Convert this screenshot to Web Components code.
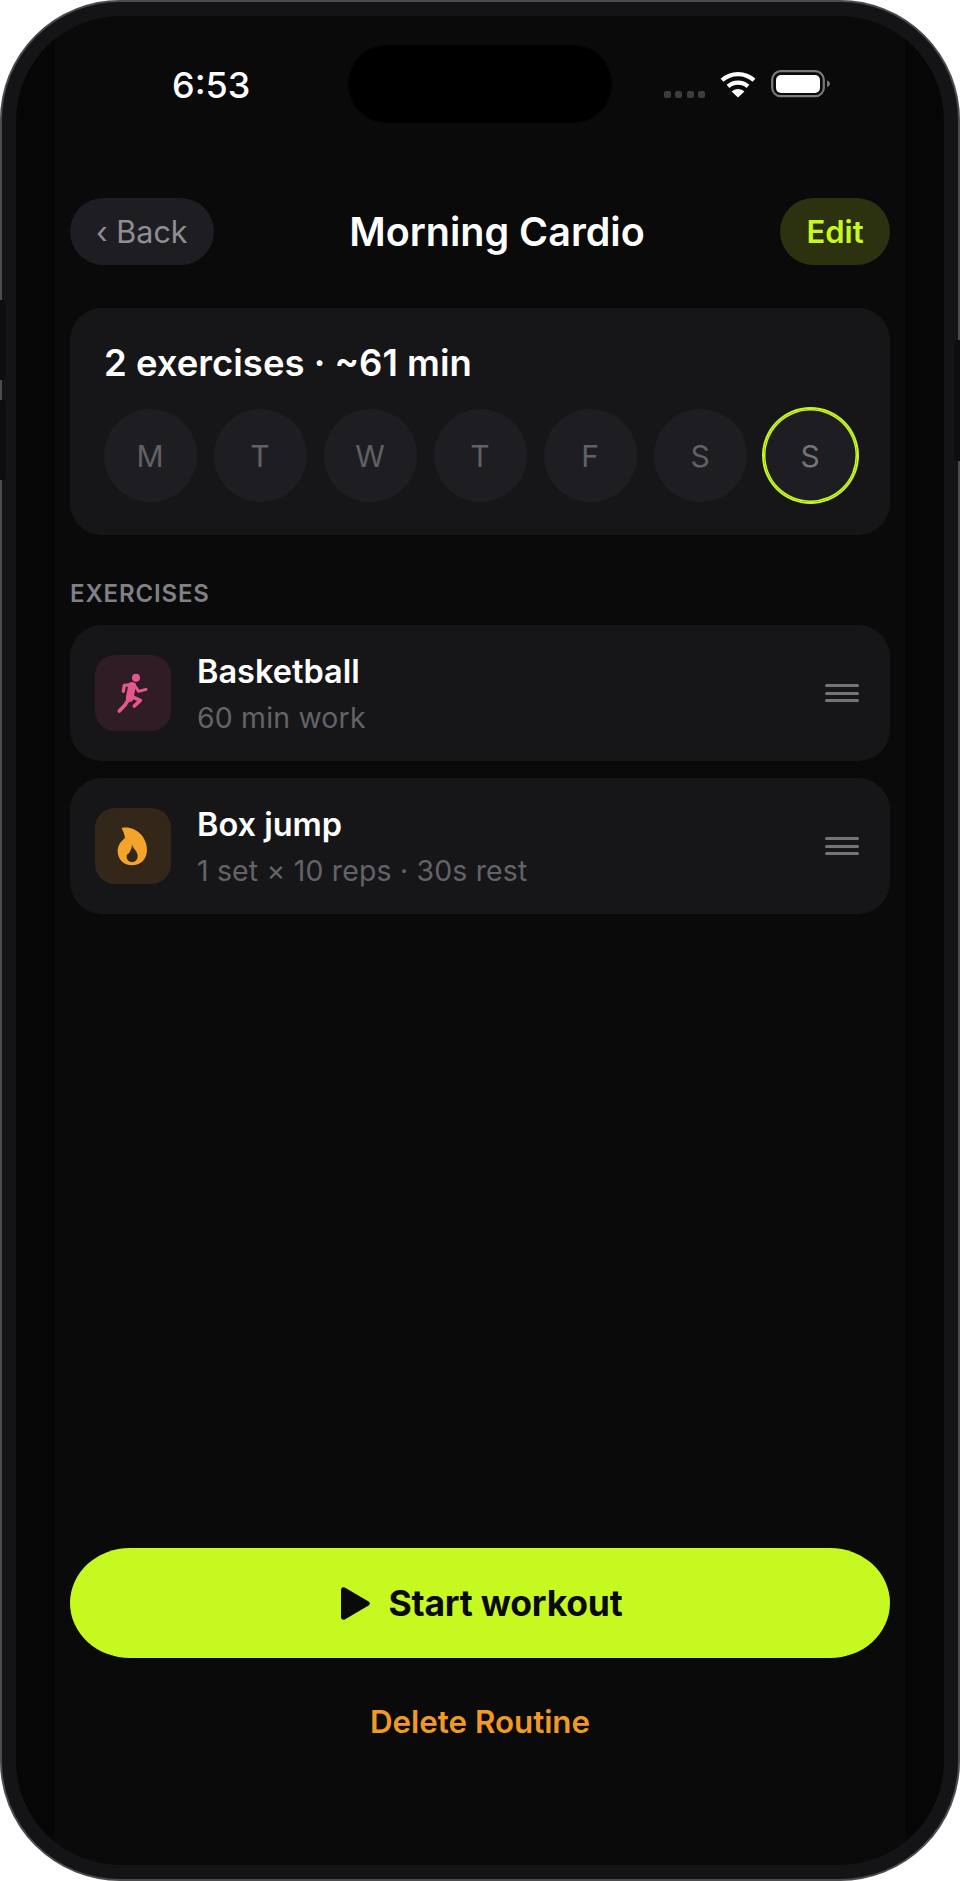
<!DOCTYPE html>
<html><head><meta charset="utf-8">
<style>
html,body{margin:0;padding:0;background:#fff}
body{width:960px;height:1881px;font-family:Inter,"Liberation Sans",sans-serif;overflow:hidden}
</style></head><body>
<template id="t-phone"><style>
:host{display:block;position:relative;width:960px;height:1881px;box-sizing:border-box;border:2px solid #4b4b50;border-radius:120px;background:#141416;padding:14px}
.screen{height:100%;box-sizing:border-box;border-radius:104px;overflow:hidden;background:linear-gradient(90deg,#060606 0,#060606 39px,#0a0a0b 39px,#0a0a0b 889px,#060606 889px);display:flex;flex-direction:column;padding:29px 54px 0}
.btn{position:absolute;background:#0e0e10;border-radius:0 4px 4px 0}
.b1{left:-2px;top:298px;width:6px;height:80px}
.b2{left:-2px;top:398px;width:6px;height:80px}
.b3{right:-2px;top:338px;width:6px;height:121px;border-radius:4px 0 0 4px}
</style><div class="btn b1"></div><div class="btn b2"></div><div class="btn b3"></div><div class="screen"><slot></slot></div></template>

<template id="t-status"><style>
:host{display:flex;position:relative;height:78px;align-items:center;color:#fff}
.time{position:absolute;left:102px;top:16px;font-size:36px;font-weight:500;line-height:48px}
.island{position:absolute;left:278px;top:0;width:264px;height:78px;border-radius:39px;background:#000}
.dots{position:absolute;left:594px;top:46px;display:flex;gap:4.4px}
.dots i{width:7px;height:7px;border-radius:2px;background:#3c3c3e}
svg{position:absolute;overflow:visible}
</style><span class="time">6:53</span><div class="island"></div>
<div class="dots"><i></i><i></i><i></i><i></i></div>
<svg style="left:650px;top:26px" width="36" height="26" viewBox="0 0 36 26"><path d="M2 9.2C11 1 25 1 34 9.2M8 15.4C13.6 10.4 22.4 10.4 28 15.4" fill="none" stroke="#fff" stroke-width="4.2"/><path d="M18 26.5 11.6 20.6C15 17 21 17 24.4 20.6Z" fill="#fff"/></svg>
<svg style="left:701px;top:25px" width="60" height="28" viewBox="0 0 60 28"><rect x="1.2" y="1.2" width="51.6" height="25" rx="8.5" fill="none" stroke="#7a7a7c" stroke-width="2.2"/><rect x="5" y="5" width="44" height="18" rx="5" fill="#fff"/><path d="M56 10.5C58 11 59 12.500 59 13.800C59 15 58 16.500 56 17Z" fill="#77777a"/></svg>
</template>

<template id="t-nav"><style>
:host{display:flex;align-items:center;margin-top:75px;height:67px}
.pill{height:67px;border-radius:34px;display:flex;align-items:center;font-size:30px;box-sizing:border-box;line-height:1;flex:none}
.back{width:144px;background:#1e1e22;color:#8e8e93;padding:1px 0 0 26px;font-size:30.500px}
.edit{width:110px;background:#2c3110;color:#c6f91f;justify-content:center;font-weight:600;font-size:31px}
.title{flex:1;text-align:center;font-size:39.500px;font-weight:600;color:#fff;line-height:68px}
</style><span class="pill back">‹ Back</span><span class="title"><slot></slot></span><span class="pill edit">Edit</span></template>

<template id="t-summary"><style>
:host{display:block;margin-top:43px;height:227px;box-sizing:border-box;background:#161618;border-radius:32px;padding:35px 34px 0}
.h{font-size:36.500px;font-weight:600;color:#fff;line-height:41px;white-space:nowrap;margin-bottom:25px}
.days{display:flex;gap:17px;margin-left:-.5px}
</style><div class="h"><slot name="head"></slot></div><div class="days"><slot></slot></div></template>

<template id="t-day"><style>
:host{display:flex;width:93px;height:93px;border-radius:50%;background:#1e1e22;color:#606066;font-size:30px;align-items:center;justify-content:center;box-sizing:border-box;flex:none}
:host([on]){box-shadow:0 0 0 2px #c6f91f,inset 0 0 0 1.500px #c6f91f;color:#737378}
</style><slot></slot></template>

<template id="t-label"><style>
:host{display:block;margin-top:47px;height:24px;line-height:24px;font-size:24px;font-weight:600;color:#808086;letter-spacing:.85px}
</style><slot></slot></template>

<template id="t-row"><style>
:host{display:flex;align-items:center;height:136px;box-sizing:border-box;background:#161618;border-radius:32px;padding:0 31px 0 25px;margin-top:17px}
:host(.first){margin-top:19px}
.tile{width:76px;height:76px;border-radius:20px;display:flex;flex:none;align-items:center;justify-content:center;overflow:hidden}
.txt{flex:1;margin-left:26px;padding-top:3px}
.a{font-size:32.500px;font-weight:600;color:#fff;line-height:38px}
.b{font-size:28.400px;color:#636369;line-height:38px;margin-top:8px;letter-spacing:.2px}
.g{display:flex;flex-direction:column;gap:4.6px;width:34px}
.g i{height:3px;border-radius:2px;background:#737378}
</style><div class="tile"><slot name="icon"></slot></div><div class="txt"><div class="a"><slot name="a"></slot></div><div class="b"><slot name="b"></slot></div></div><div class="g"><i></i><i></i><i></i></div></template>

<template id="t-start"><style>
:host{display:flex;margin-top:auto;height:110px;align-items:center;justify-content:center;gap:18px;padding-left:4px;box-sizing:border-box;background:#c6f91f;border-radius:60px/55px;color:#0a0a0a;font-size:35.500px;font-weight:700;letter-spacing:-.2px}
svg{display:block}
</style><svg width="29" height="33" viewBox="0 0 29 33"><path d="M0 3C0 .6 2.200-.6 4.200.8L27.600 14.600C29.300 15.600 29.300 17.400 27.600 18.400L4.200 32.200C2.200 33.600 0 32.400 0 30Z" fill="#0a0a0a"/></svg><slot></slot></template>

<template id="t-del"><style>
:host{display:block;text-align:center;margin-top:46px;margin-bottom:125px;height:36px;line-height:36px;font-size:31.300px;font-weight:600;color:#f09a24}
</style><slot></slot></template>

<x-phone>
<x-status></x-status>
<x-nav>Morning Cardio</x-nav>
<x-summary><span slot="head">2 exercises · ~61 min</span>
<x-day>M</x-day><x-day>T</x-day><x-day>W</x-day><x-day>T</x-day><x-day>F</x-day><x-day>S</x-day><x-day on>S</x-day></x-summary>
<x-label>EXERCISES</x-label>
<x-row class="first">
<svg slot="icon" width="76" height="76" viewBox="32 47 228 228" style="display:block;background:#2f1c24"><g fill="none" stroke="#e5578e" stroke-linecap="round" stroke-linejoin="round"><circle cx="155" cy="115" r="12" fill="#e5578e" stroke="none"/><path d="M117 156 120 138 150 135" stroke-width="10"/><path d="M143 140 136 176" stroke-width="23"/><path d="M152 140 163 156 185 150" stroke-width="9"/><path d="M133 180 122 197 105 215" stroke-width="11"/><path d="M138 170 168 183 150 200" stroke-width="11"/></g></svg>
<span slot="a">Basketball</span><span slot="b">60 min work</span></x-row>
<x-row>
<svg slot="icon" width="76" height="76" viewBox="32 506 228 228" style="display:block;background:#33271a"><path fill-rule="evenodd" fill="#f4a42a" d="M112 566C150 558 188 590 188 632C188 660 168 678 143 678C118 678 100 660 100 635C100 618 110 606 122 596C121 584 116 576 112 566ZM143 615C146 630 160 635 160 650C160 662 152 668 143 668C133 668 126 660 127 650C128 642 132 645 135 640C140 632 143 625 143 615Z"/></svg>
<span slot="a">Box jump</span><span slot="b">1 set × 10 reps · 30s rest</span></x-row>
<x-start>Start workout</x-start>
<x-del>Delete Routine</x-del>
</x-phone>
<script>
for(const [n,t] of [['x-phone','t-phone'],['x-status','t-status'],['x-nav','t-nav'],['x-summary','t-summary'],['x-day','t-day'],['x-label','t-label'],['x-row','t-row'],['x-start','t-start'],['x-del','t-del']]){
 customElements.define(n,class extends HTMLElement{constructor(){super();this.attachShadow({mode:'open'}).append(document.getElementById(t).content.cloneNode(true))}});
}
</script>
</body></html>
